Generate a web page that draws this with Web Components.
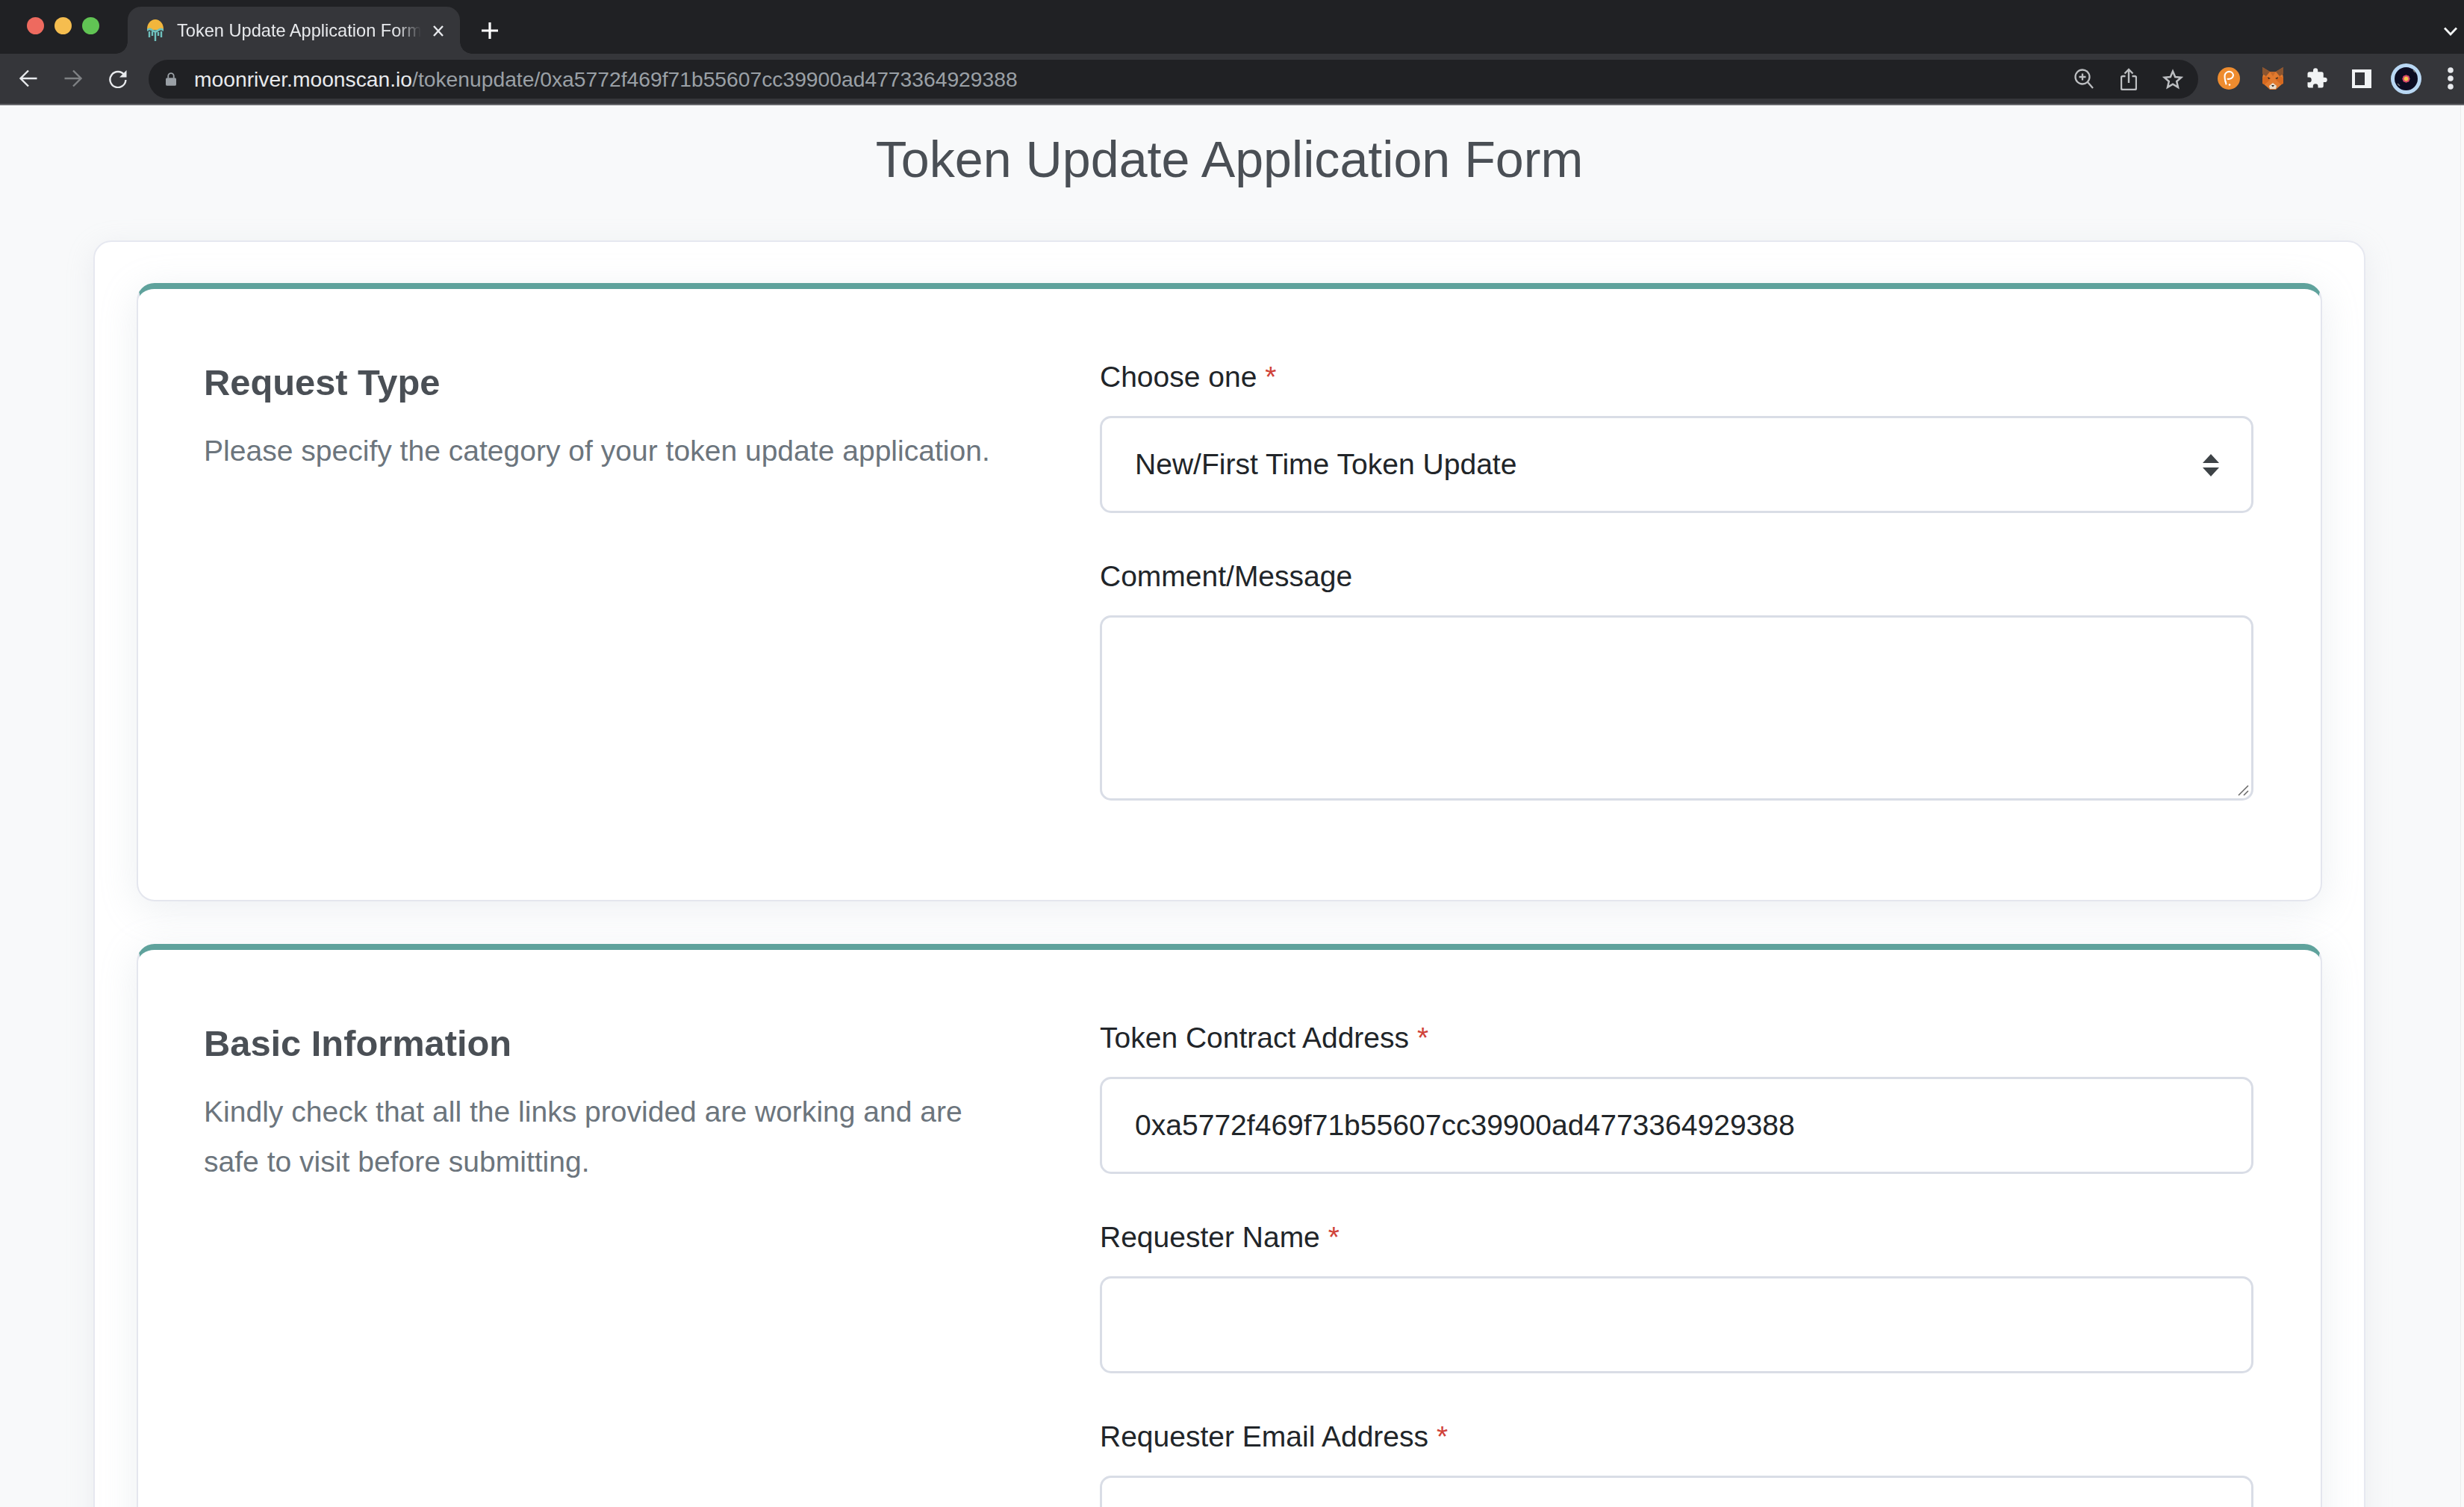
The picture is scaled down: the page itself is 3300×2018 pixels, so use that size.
<!DOCTYPE html>
<html lang="en"><head><meta charset="utf-8"><title>Token Update Application Form</title>
<style>
html,body{margin:0;padding:0;width:3300px;height:2018px;overflow:hidden;background:#f8f9fa;font-family:"Liberation Sans",Arial,sans-serif}
body{display:flex;flex-direction:column}
</style></head><body>
<browser-chrome></browser-chrome>
<form-page heading="Token Update Application Form">
  <form-section heading="Request Type" text="Please specify the category of your token update application.">
    <form-field label="Choose one" required><select-box>New/First Time Token Update</select-box></form-field>
    <form-field label="Comment/Message"><text-area></text-area></form-field>
  </form-section>
  <form-section heading="Basic Information" text="Kindly check that all the links provided are working and are safe to visit before submitting.">
    <form-field label="Token Contract Address" required><text-input>0xa5772f469f71b55607cc39900ad4773364929388</text-input></form-field>
    <form-field label="Requester Name" required><text-input></text-input></form-field>
    <form-field label="Requester Email Address" required><text-input></text-input></form-field>
  </form-section>
</form-page>
<script>
function def(name,html,init){
  customElements.define(name,class extends HTMLElement{
    constructor(){super();this.attachShadow({mode:'open'}).innerHTML=html;}
    connectedCallback(){if(init)init(this,this.shadowRoot);}
  });
}
def('browser-chrome',`<style>
:host{display:block;flex:none;font-family:"Liberation Sans",Arial,sans-serif}
.strip{height:72px;background:#202124;display:flex;align-items:flex-end;position:relative}
.lights{width:171px;height:72px;box-sizing:border-box;padding:23px 0 0 36px;display:flex;gap:14px;flex:none}
.lights i{width:23px;height:23px;border-radius:50%;display:block}
.tab{width:445px;height:63px;background:#35363a;border-radius:18px 18px 0 0;position:relative;display:flex;align-items:center;padding-left:25px;box-sizing:border-box;flex:none}
.tab:before,.tab:after{content:"";position:absolute;bottom:0;width:16px;height:16px;background:radial-gradient(circle at 0 0,transparent 15.5px,#35363a 16px)}
.tab:before{left:-16px}
.tab:after{right:-16px;transform:scaleX(-1)}
.fav{width:24px;height:30px;flex:none;display:block;margin-top:-2px}
.ttl{margin-left:17px;width:327px;white-space:nowrap;overflow:hidden;font-size:23.6px;color:#e8eaed;line-height:28px;flex:none;-webkit-mask-image:linear-gradient(90deg,#000 90%,transparent 100%);mask-image:linear-gradient(90deg,#000 90%,transparent 100%)}
.x{position:absolute;left:406px;top:22px;display:block}
.plus{position:absolute;left:643px;top:28px;display:block}
.chev{position:absolute;left:3272px;top:36px;display:block}
.bar{height:67px;background:#35363a;display:flex;align-items:flex-start;padding:0 0 0 8px;box-sizing:border-box;overflow:hidden}
.ln{height:2px;background:#65666a}
.b{width:60px;height:66px;display:flex;align-items:center;justify-content:center;flex:none}
.b svg{display:block}
.pill{margin:8px 0 0 11px;width:2745px;height:52px;background:#202124;border-radius:26px;display:flex;align-items:center;flex:none;box-sizing:border-box;padding-left:23px}
.lock{display:block;flex:none}
.url{margin-left:24px;font-size:28.25px;white-space:nowrap;color:#9aa0a6;line-height:52px;flex:1;min-width:0}
.url b{font-weight:400;color:#e8eaed}
.pb{width:59.5px;height:52px;display:flex;align-items:center;justify-content:center;flex:none}
.pill .pb:last-child{margin-right:4px}
.ext{display:flex;margin-left:11px;flex:none}
.eb{width:59.4px;height:66px;display:flex;align-items:center;justify-content:center;flex:none}
</style>
<div class="strip">
  <div class="lights"><i style="background:#ee6a5f"></i><i style="background:#f5bd4f"></i><i style="background:#61c454"></i></div>
  <div class="tab">
    <svg class="fav" viewBox="0 0 24 30"><path d="M1 14a11 13 0 0 1 22 0v1H1z" fill="#f2b63c"/><path d="M1 14c3-2 5-2 7 0s5 2 8 0 5-2 7 0v3c-3-2-5-2-7 0s-5 2-8 0-5-2-7 0z" fill="#6fc0bd"/><path d="M4 17v8M8 17v6M12 18v12M16 18v5M20 17v8" stroke="#6fc0bd" stroke-width="2.4" fill="none"/></svg>
    <div class="ttl">Token Update Application Form</div>
    <svg class="x" width="20" height="20" viewBox="0 0 20 20"><path d="M4 4l12 13M16 4L4 17" stroke="#e8eaed" stroke-width="2.4" fill="none"/></svg>
  </div>
  <svg class="plus" width="26" height="26" viewBox="0 0 26 26"><path d="M13 2v22M2 13h22" stroke="#fff" stroke-width="3.2" fill="none"/></svg>
  <svg class="chev" width="20" height="12" viewBox="0 0 20 12"><path d="M2 1.5l8 8.5 8-8.5" stroke="#f1f3f4" stroke-width="2.8" fill="none"/></svg>
</div>
<div class="bar">
  <div class="b"><svg width="26" height="26" viewBox="0 0 26 26"><path d="M24.5 13H2.5M13 2.5L2.5 13 13 23.5" stroke="#e8eaed" stroke-width="2.4" fill="none"/></svg></div>
  <div class="b"><svg width="26" height="26" viewBox="0 0 26 26"><path d="M1.5 13h22M13 2.5L23.5 13 13 23.5" stroke="#7f8184" stroke-width="2.4" fill="none"/></svg></div>
  <div class="b"><svg width="26" height="26" viewBox="0 0 26 26"><path d="M21.5 8.5A10.5 10.5 0 1 0 23.4 15" stroke="#e8eaed" stroke-width="2.4" fill="none"/><path d="M24.5 2v9.5H15z" fill="#e8eaed"/></svg></div>
  <div class="pill">
    <svg class="lock" width="14" height="18" viewBox="0 0 15 19"><path d="M3.5 8V5a4 4 0 0 1 8 0v3" stroke="#9aa0a6" stroke-width="2" fill="none"/><rect x="0" y="7.5" width="15" height="11.5" rx="2" fill="#9aa0a6"/></svg>
    <div class="url"><b>moonriver.moonscan.io</b>/tokenupdate/0xa5772f469f71b55607cc39900ad4773364929388</div>
    <div class="pb"><svg width="26" height="28" viewBox="0 0 26 28"><circle cx="11" cy="11" r="9.5" stroke="#bcbec1" stroke-width="2.3" fill="none"/><path d="M11 6.5v9M6.5 11h9M18 18l7 8" stroke="#bcbec1" stroke-width="2.3" fill="none"/></svg></div>
    <div class="pb"><svg width="22" height="30" viewBox="0 0 22 30"><path d="M6.5 11H3a2 2 0 0 0-2 2v14a2 2 0 0 0 2 2h16a2 2 0 0 0 2-2V13a2 2 0 0 0-2-2h-3.500M11 20V2M5.500 7.500L11 2l5.500 5.500" stroke="#bcbec1" stroke-width="2.400" fill="none"/></svg></div>
    <div class="pb"><svg width="28" height="28" viewBox="0 0 28 28"><path d="M14 3.500l3.200 7.500 8.100.7-6.100 5.300 1.800 7.900-7-4.200-7 4.200 1.800-7.900-6.100-5.300 8.100-.7z" stroke="#bcbec1" stroke-width="2.500" fill="none" stroke-linejoin="miter"/></svg></div>
  </div>
  <div class="ext">
    <div class="eb"><svg width="30" height="30" viewBox="0 0 30 30"><circle cx="15" cy="15" r="15" fill="#ee8c2f"/><path d="M10.500 19.500C9.500 15 9 12 10 9.500c1-2.500 4-4 6.500-3.500 3 .6 4.700 3 4.300 5.500-.5 3-3.500 4.700-7.300 4.300" stroke="#fff" stroke-width="2.100" fill="none" stroke-linecap="round"/><path d="M10.800 19.500l.6 3" stroke="#fff" stroke-width="2.100" stroke-linecap="round"/><circle cx="16" cy="23.500" r="1.300" fill="#fff"/></svg></div>
    <div class="eb"><svg width="30" height="32" viewBox="0 0 30 32"><path d="M1 1l10 6h8l10-6-1 9 1 5-1 8-7 6-2 2h-8l-2-2-7-6-1-8 1-5z" fill="#e27a2e"/><path d="M1 1l10 6-5 6-5-3zM29 1L19 7l5 6 5-3z" fill="#8a5530"/><path d="M11 7h8l-4 6z" fill="#c96a28"/><path d="M6 13l5 5-7 6-3-1 0-8zM24 13l-5 5 7 6 3-1 0-8z" fill="#d6691f"/><path d="M10 26l5-4 5 4-1 4h-8z" fill="#e8dccb"/><path d="M13 25h4l-2 2.500z" fill="#2a2320"/><path d="M8 14l4 2-3 1zM22 14l-4 2 3 1z" fill="#35281f"/></svg></div>
    <div class="eb"><svg width="30" height="30" viewBox="0 0 24 24"><path d="M20.500 11H19V7a2 2 0 0 0-2-2h-4V3.500a2.500 2.500 0 0 0-5 0V5H4a2 2 0 0 0-2 2v3.800h1.500a2.700 2.700 0 0 1 0 5.400H2V20a2 2 0 0 0 2 2h3.800v-1.500a2.700 2.700 0 0 1 5.400 0V22H17a2 2 0 0 0 2-2v-4h1.500a2.500 2.500 0 0 0 0-5z" fill="#f1f3f4"/></svg></div>
    <div class="eb"><svg width="26" height="25" viewBox="0 0 26 25"><path fill-rule="evenodd" d="M0 0h26v25H0zM4 4v17h13V4z" fill="#f1f3f4"/></svg></div>
    <div class="eb"><svg width="41" height="41" viewBox="0 0 41 41"><defs><radialGradient id="d"><stop offset="0" stop-color="#f2c84b"/><stop offset=".28" stop-color="#f2c84b"/><stop offset=".42" stop-color="#e2506e"/><stop offset=".62" stop-color="#b73a5e"/><stop offset=".65" stop-color="#0c0c22"/><stop offset="1" stop-color="#0c0c22"/></radialGradient></defs><circle cx="20.500" cy="20.500" r="20.500" fill="#b9d8f4"/><circle cx="20.500" cy="20.500" r="15.500" fill="#0c0c22"/><circle cx="20.500" cy="20.500" r="8" fill="url(#d)"/><path d="M9 27l3 3M30 9l3 3" stroke="#777" stroke-width="1.500"/></svg></div>
    <div class="eb"><svg width="8" height="30" viewBox="0 0 8 30"><circle cx="4" cy="4" r="3.800" fill="#e8eaed"/><circle cx="4" cy="15" r="3.800" fill="#e8eaed"/><circle cx="4" cy="26" r="3.800" fill="#e8eaed"/></svg></div>
  </div>
</div>
<div class="ln"></div>`);

def('form-page',`<style>
:host{display:block;flex:1;min-height:0;overflow:hidden;background:#f8f9fa;position:relative;font-family:"Liberation Sans",Arial,sans-serif}
h1{margin:0;padding-top:22px;height:100px;line-height:100px;text-align:center;font-weight:400;font-size:68.2px;color:#4a4f55;width:3043px;margin-left:125px;margin-bottom:59px;white-space:nowrap}
.outer{margin-left:125px;width:3043px;box-sizing:border-box;background:#fff;border:2px solid #e6e8f0;border-radius:24px;padding:55px 56px;display:flex;flex-direction:column;gap:57px;box-shadow:0 8px 36px rgba(189,197,209,.22)}
.sb{position:absolute;right:0;top:0;bottom:0;width:4px;background:#fafafa;border-left:1px solid #ececec}
</style><h1></h1><div class="outer"><slot></slot></div><div class="sb"></div>`,
(h,s)=>{s.querySelector('h1').textContent=h.getAttribute('heading')});

def('form-section',`<style>
:host{display:grid;grid-template-columns:1200px 1545px;box-sizing:border-box;background:#fff;border:2px solid #e4e6ee;border-top:8px solid #5fa29c;border-radius:24px;padding:88px 92px 133px 88px;box-shadow:0 10px 50px rgba(170,180,195,.22)}
h2{margin:0 0 21px;font-size:48.8px;line-height:74px;font-weight:700;color:#4a4f55}
p{margin:0;font-size:39.05px;line-height:67px;color:#6c757d;max-width:1090px}
.r{display:flex;flex-direction:column;gap:55px}
</style><div><h2></h2><p></p></div><div class="r"><slot></slot></div>`,
(h,s)=>{s.querySelector('h2').textContent=h.getAttribute('heading');s.querySelector('p').textContent=h.getAttribute('text')});

def('form-field',`<style>
:host{display:block}
.l{display:block;font-size:39px;line-height:60px;color:#212529;margin-bottom:22px;white-space:nowrap}
.s{color:#d0433a;margin-left:11px}
</style><div class="l"><span class="t"></span></div><slot></slot>`,
(h,s)=>{s.querySelector('.t').textContent=h.getAttribute('label');
 if(h.hasAttribute('required')){const i=document.createElement('span');i.className='s';i.textContent='*';s.querySelector('.l').appendChild(i);}});

const box=`:host{display:flex;align-items:center;box-sizing:border-box;height:130px;background:#fff;border:3px solid #d9dde6;border-radius:15px;padding:0 44px;font-size:39.05px;color:#212529;white-space:nowrap;position:relative}`;
def('select-box',`<style>${box}
svg{position:absolute;left:1473px;top:48px;display:block}</style><slot></slot>
<svg width="24" height="30" viewBox="0 0 24 30"><path d="M12 0l11 12H1zM1 18h22L12 30z" fill="#3e4347"/></svg>`);
def('text-input',`<style>${box}</style><slot></slot>`);
def('text-area',`<style>${box}
:host{height:248px}
svg{position:absolute;right:1px;bottom:1px;display:block}</style>
<svg width="18" height="18" viewBox="0 0 18 18"><path d="M2 15L15 2M9 15l6-6" stroke="#666" stroke-width="1.500" fill="none"/></svg>`);
</script>
</body></html>
